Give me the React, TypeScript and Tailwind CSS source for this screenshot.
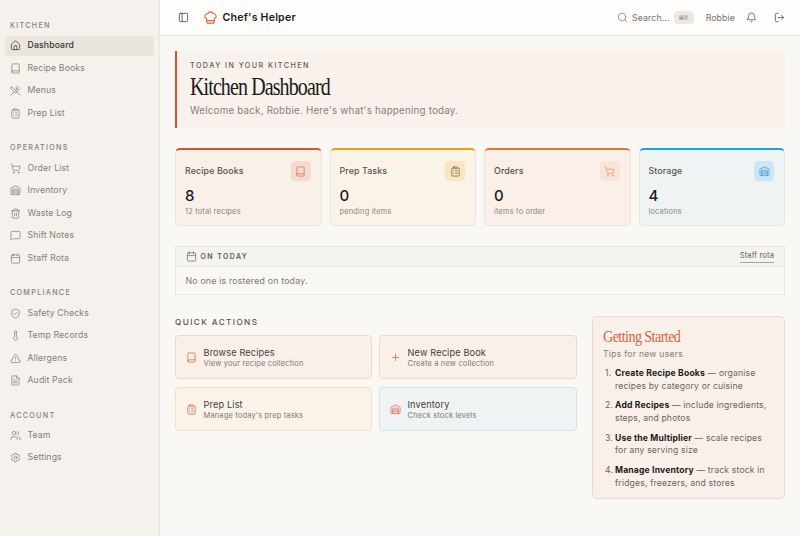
import React from 'react';
import {
  Bell, Book, Calendar, ChefHat, ClipboardList, FileText, House, LogOut, MessageSquare, PanelLeft, Plus,
  Search, Settings, ShieldCheck, ShoppingCart, Thermometer, Trash2, TriangleAlert, Users, UtensilsCrossed, Warehouse,
} from 'lucide-react';

const sans = "font-['Inter','Liberation_Sans',sans-serif]";

const navGroups = [
  {
    label: 'KITCHEN',
    items: [
      { name: 'Dashboard', icon: House, active: true },
      { name: 'Recipe Books', icon: Book },
      { name: 'Menus', icon: UtensilsCrossed },
      { name: 'Prep List', icon: ClipboardList },
    ],
  },
  {
    label: 'OPERATIONS',
    items: [
      { name: 'Order List', icon: ShoppingCart },
      { name: 'Inventory', icon: Warehouse },
      { name: 'Waste Log', icon: Trash2 },
      { name: 'Shift Notes', icon: MessageSquare },
      { name: 'Staff Rota', icon: Calendar },
    ],
  },
  {
    label: 'COMPLIANCE',
    items: [
      { name: 'Safety Checks', icon: ShieldCheck },
      { name: 'Temp Records', icon: Thermometer },
      { name: 'Allergens', icon: TriangleAlert },
      { name: 'Audit Pack', icon: FileText },
    ],
  },
  {
    label: 'ACCOUNT',
    items: [
      { name: 'Team', icon: Users },
      { name: 'Settings', icon: Settings },
    ],
  },
];

const stats = [
  { title: 'Recipe Books', value: '8', sub: '12 total recipes', icon: Book, card: 'border-t-[#d9541e] bg-[#f9f0ea]', chip: 'bg-[#f4dccf] text-[#d9664a]' },
  { title: 'Prep Tasks', value: '0', sub: 'pending items', icon: ClipboardList, card: 'border-t-[#f59e0b] bg-[#faf3e8]', chip: 'bg-[#f8e5c2] text-[#6f5a2c]' },
  { title: 'Orders', value: '0', sub: 'items to order', icon: ShoppingCart, card: 'border-t-[#e9762b] bg-[#faf0e9]', chip: 'bg-[#f9e4d8] text-[#ec8a5a]' },
  { title: 'Storage', value: '4', sub: 'locations', icon: Warehouse, card: 'border-t-[#0ea5e9] bg-[#eff3f4]', chip: 'bg-[#cbe7f7] text-[#3b8fd0]' },
];

const actions = [
  { title: 'Browse Recipes', sub: 'View your recipe collection', icon: Book, card: 'bg-[#f9f0ea] border-[#f0d8ca]' },
  { title: 'New Recipe Book', sub: 'Create a new collection', icon: Plus, card: 'bg-[#f9f0ea] border-[#f0d8ca]' },
  { title: 'Prep List', sub: "Manage today's prep tasks", icon: ClipboardList, card: 'bg-[#faf3e8] border-[#f6e1c0]' },
  { title: 'Inventory', sub: 'Check stock levels', icon: Warehouse, card: 'bg-[#eff3f4] border-[#cfe4f1]' },
];

const tips = [
  { bold: 'Create Recipe Books', text: ' — organise recipes by category or cuisine' },
  { bold: 'Add Recipes', text: ' — include ingredients, steps, and photos' },
  { bold: 'Use the Multiplier', text: ' — scale recipes for any serving size' },
  { bold: 'Manage Inventory', text: ' — track stock in fridges, freezers, and stores' },
];

const Sidebar: React.FC = () => (
  <aside className="w-40 shrink-0 h-full bg-[#f5f1ed] border-r border-[#e8e4df] pt-[19px] px-[5px]">
    {navGroups.map((group) => (
      <div key={group.label} className="mb-[18.4px]">
        <div className="h-[13px] pl-[5px] text-[7.2px] leading-[13px] font-medium tracking-[0.18em] text-[#85807a]">{group.label}</div>
        <div className="mt-[4px] flex flex-col gap-[3px]">
          {group.items.map((item) => (
            <div
              key={item.name}
              className={`h-[19.5px] flex items-center gap-[7px] pl-[4.5px] rounded text-[8.7px] tracking-[0.015em] ${
                item.active ? 'bg-[#ebe6dd] text-[#3a3530] font-medium' : 'text-[#85807a]'
              }`}
            >
              <item.icon className="w-[11px] h-[11px]" strokeWidth={1.6} />
              {item.name}
            </div>
          ))}
        </div>
      </div>
    ))}
  </aside>
);

const Header: React.FC = () => (
  <header className="h-9 shrink-0 bg-[#fefdfc] border-b border-[#e8e4df] flex items-center pl-[17.5px] pr-[15.5px]">
    <PanelLeft className="w-[11px] h-[11px] text-[#3a3633]" strokeWidth={1.6} />
    <ChefHat className="ml-[14px] w-[15px] h-[15px] text-[#dc6240]" strokeWidth={1.7} />
    <span className="ml-[5px] text-[10.6px] font-semibold tracking-[0.02em] text-[#1c1917]">Chef's Helper</span>
    <div className="ml-auto flex items-center text-[#77716b]">
      <Search className="w-[11px] h-[11px]" strokeWidth={1.6} />
      <span className="ml-[4px] text-[8.8px] tracking-[0.01em]">Search...</span>
      <span className="ml-[4px] w-[20px] h-[13px] rounded-sm bg-[#ece9e4] text-[6px] leading-[13px] text-center text-[#8a847e]">⌘K</span>
      <span className="ml-[12px] text-[8.8px] tracking-[0.01em]">Robbie</span>
      <Bell className="ml-[10.5px] w-[11px] h-[11px] text-[#3a3633]" strokeWidth={1.5} />
      <LogOut className="ml-[17px] w-[11px] h-[11px] text-[#3a3633]" strokeWidth={1.5} />
    </div>
  </header>
);

const StatCard: React.FC<(typeof stats)[number]> = ({ title, value, sub, icon: Icon, card, chip }) => (
  <div className={`h-[78px] rounded-[5px] border border-[#e9e4dd] border-t-2 pl-[9px] pr-[10px] pt-[11px] ${card}`}>
    <div className="flex items-start justify-between">
      <span className="mt-[3px] text-[8.8px] font-medium tracking-[0.015em] text-[#57524d]">{title}</span>
      <span className={`w-5 h-5 rounded flex items-center justify-center ${chip}`}>
        <Icon className="w-[11px] h-[11px]" strokeWidth={1.5} />
      </span>
    </div>
    <div className="mt-[7px] text-[15px] leading-[16px] font-medium text-[#1c1917]">{value}</div>
    <div className="mt-[2px] text-[7.5px] leading-[12px] tracking-[0.02em] text-[#8a857f]">{sub}</div>
  </div>
);

const App: React.FC = () => (
  <div className={`w-[800px] h-[536px] flex overflow-hidden bg-[#faf8f5] ${sans}`}>
    <Sidebar />
    <div className="flex-1 flex flex-col min-w-0">
      <Header />
      <main className="flex-1 px-[15px] pt-[15px]">
        {/* Hero */}
        <section className="h-[77px] border-l-2 border-[#c9553a] bg-[#f9f1ec] pl-[13px] pt-[9px]">
          <div className="text-[7.2px] leading-[12px] font-medium tracking-[0.2em] text-[#5f5a55]">TODAY IN YOUR KITCHEN</div>
          <h1 className="font-['Liberation_Serif',serif] text-[26px] leading-[30px] tracking-[-0.045em] text-[#1c1917] origin-left scale-x-[0.77]">Kitchen Dashboard</h1>
          <p className="mt-[2px] text-[9.8px] leading-[14px] tracking-[0.02em] text-[#85807a]">Welcome back, Robbie. Here's what's happening today.</p>
        </section>

        {/* Stats */}
        <section className="mt-5 grid grid-cols-4 gap-2">
          {stats.map((s) => <StatCard key={s.title} {...s} />)}
        </section>

        {/* On today */}
        <section className="mt-5 h-[49px] border border-[#e9e5df]">
          <div className="h-[20px] bg-[#f5f3ef] border-b border-[#e9e5df] flex items-center pl-[9.5px] pr-[10px]">
            <Calendar className="w-[11px] h-[11px] text-[#6b6660]" strokeWidth={1.5} />
            <span className="ml-[4px] mt-[1px] text-[7px] font-semibold tracking-[0.2em] text-[#5f5a55]">ON TODAY</span>
            <span className="ml-auto text-[7.5px] tracking-[0.02em] text-[#5f5a55] border-b border-[#a8a29c]">Staff rota</span>
          </div>
          <div className="pl-[9.5px] pt-[7px] text-[8.8px] leading-[14px] tracking-[0.02em] text-[#7f7973]">No one is rostered on today.</div>
        </section>

        {/* Lower */}
        <section className="mt-[21px] flex gap-[15px]">
          <div className="w-[402px] shrink-0">
            <h2 className="h-[12px] text-[8.2px] leading-[12px] font-medium tracking-[0.17em] text-[#57524d]">QUICK ACTIONS</h2>
            <div className="mt-[7px] grid grid-cols-[197px_198px] gap-x-[7px] gap-y-[8px]">
              {actions.map((a) => (
                <div key={a.title} className={`h-[44px] rounded border flex items-center pl-[9.5px] ${a.card}`}>
                  <a.icon className="w-[11px] h-[11px] text-[#dc6240] shrink-0" strokeWidth={1.6} />
                  <div className="ml-[7px] mt-[2px]">
                    <div className="text-[9.2px] leading-[12px] tracking-[0.015em] text-[#44403c]">{a.title}</div>
                    <div className="text-[7.5px] leading-[10.5px] tracking-[0.02em] text-[#7f7973]">{a.sub}</div>
                  </div>
                </div>
              ))}
            </div>
          </div>
          <aside className="w-[193px] h-[183px] rounded-[5px] border border-[#f0d8ca] bg-[#f9f0ea] pl-[10px] pr-[8px] pt-[10px]">
            <h3 className="font-['Liberation_Serif',serif] text-[17px] leading-[20px] tracking-[-0.04em] text-[#d4633f] origin-left scale-x-[0.83]">Getting Started</h3>
            <p className="mt-[1px] text-[8.6px] leading-[12px] tracking-[0.03em] text-[#85807a]">Tips for new users</p>
            <ol className="mt-[7px] flex flex-col gap-[7.4px]">
              {tips.map((t, i) => (
                <li key={t.bold} className="flex text-[8.6px] leading-[12.5px] tracking-[0.02em] text-[#6b6660]">
                  <span className="w-[10px] shrink-0 ml-[2px]">{i + 1}.</span>
                  <span>
                    <b className="font-bold text-[#1c1917]">{t.bold}</b>
                    {t.text}
                  </span>
                </li>
              ))}
            </ol>
          </aside>
        </section>
      </main>
    </div>
  </div>
);

export default App;
